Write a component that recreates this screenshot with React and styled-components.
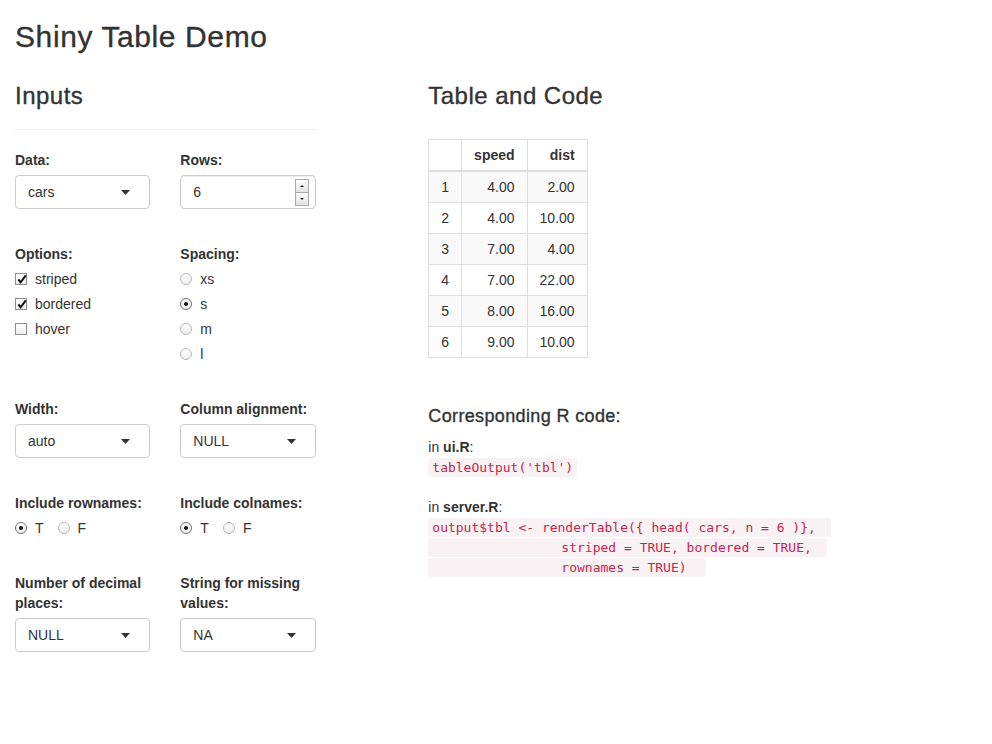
import React from 'react';
import styled, { createGlobalStyle, css } from 'styled-components';

const GlobalStyle = createGlobalStyle`
  html, body { margin: 0; padding: 0; background: #fff; }
  body {
    font-family: "Liberation Sans", Arial, sans-serif;
    font-size: 14px;
    line-height: 20px;
    color: #333;
  }
  *, *::before, *::after { box-sizing: border-box; }
`;

const headingFace = css`
  font-weight: 500;
  letter-spacing: 0.02em;
  -webkit-text-stroke: 0.35px currentColor;
`;

const Page = styled.div`
  padding: 0 15px;
`;

const Title = styled.h2`
  ${headingFace}
  font-size: 30px;
  line-height: 33px;
  margin: 20px 0 10px;
`;

const Row = styled.div`
  display: flex;
  align-items: flex-start;
  margin: 0 -15px;
`;

const Sidebar = styled.div`
  width: 33.3333%;
  padding: 0 15px;
`;

const Main = styled.div`
  width: 58.3333%;
  margin-left: 8.3333%;
  padding: 0 15px;
`;

const SectionTitle = styled.h3`
  ${headingFace}
  font-size: 24px;
  line-height: 26.4px;
  margin: 20px 0 10px;
`;

const Rule = styled.hr`
  box-sizing: content-box;
  height: 0;
  margin: 20px 0;
  border: 0;
  border-top: 1px solid #eee;
`;

const Inputs = styled.div`
  display: flex;
  flex-direction: column;
  gap: 35px;
`;

const InputRow = styled.div`
  display: grid;
  grid-template-columns: 1fr 1fr;
  column-gap: 30px;
  align-items: start;
`;

const Field = styled.div``;

const Label = styled.div`
  font-weight: bold;
  line-height: 20px;
  margin-bottom: 5px;
`;

const SelectBox = styled.div`
  height: 34px;
  border: 1px solid #ccc;
  border-radius: 4px;
  background: #fff;
  display: flex;
  align-items: center;
  justify-content: space-between;
  padding: 0 19px 0 12px;
`;

const NumberBox = styled(SelectBox)`
  padding: 0 6px 0 12px;
  box-shadow: inset 0 1px 1px rgba(0, 0, 0, 0.075);
`;

const Caret = styled.svg`
  width: 9px;
  height: 5px;
  display: block;
`;

const Spinner = styled.div`
  display: flex;
  flex-direction: column;
`;

const SpinButton = styled.span`
  width: 14px;
  height: 14px;
  border: 1px solid #a9a9a9;
  background: linear-gradient(#fdfdfd, #e2e2e2);
  display: flex;
  align-items: center;
  justify-content: center;
  & + & {
    height: 13px;
    border-top: 0;
  }
  &::after {
    content: "";
    width: 0;
    height: 0;
    border-left: 2px solid transparent;
    border-right: 2px solid transparent;
    ${(p) => (p.$up ? 'border-bottom: 2px solid #222;' : 'border-top: 2px solid #222;')}
  }
`;

const OptionList = styled.div`
  display: flex;
  flex-direction: column;
  gap: 5px;
`;

const InlineOptions = styled.div`
  display: flex;
  gap: 14px;
`;

const Option = styled.label`
  display: flex;
  align-items: flex-start;
  gap: 8px;
  line-height: 20px;
`;

const CheckBox = styled.span`
  flex: none;
  width: 12px;
  height: 12px;
  margin-top: 4px;
  border: 1px solid #8c8c8c;
  background: linear-gradient(#ffffff, #ececec);
  position: relative;
  svg {
    position: absolute;
    left: 0;
    top: -1px;
  }
`;

const RadioDot = styled.span`
  flex: none;
  width: 12px;
  height: 12px;
  margin-top: 4px;
  border-radius: 50%;
  border: 1px solid ${(p) => (p.$checked ? '#6f6f6f' : '#b8b8b8')};
  background: linear-gradient(#ffffff, #ededed);
  display: flex;
  align-items: center;
  justify-content: center;
  &::after {
    content: "";
    width: 4px;
    height: 4px;
    border-radius: 50%;
    background: ${(p) => (p.$checked ? '#111' : 'transparent')};
  }
`;

const Table = styled.table`
  border-collapse: collapse;
  border: 1px solid #ddd;
  margin: 30px 0 0;
  font-size: 14px;
`;

const Th = styled.th`
  padding: 5px 12px;
  line-height: 20px;
  border: 1px solid #ddd;
  border-bottom-width: 2px;
  font-weight: bold;
  text-align: right;
`;

const Td = styled.td`
  padding: 5px 12px;
  line-height: 20px;
  border: 1px solid #ddd;
  text-align: ${(p) => (p.$left ? 'left' : 'right')};
`;

const BodyRow = styled.tr`
  background: ${(p) => (p.$striped ? '#f9f9f9' : '#fff')};
`;

const CodeTitle = styled.h4`
  ${headingFace}
  font-size: 18px;
  line-height: 19.8px;
  margin: 49px 0 10px;
`;

const CodeText = styled.div`
  line-height: 20px;
`;

const Code = styled.code`
  font-family: "DejaVu Sans Mono", Menlo, monospace;
  font-size: 13px;
  line-height: 1;
  color: #c7254e;
  background: #f9f2f4;
  padding: 2px 4px;
  border-radius: 4px;
  white-space: pre;
`;

function Select({ value }) {
  return (
    <SelectBox>
      <span>{value}</span>
      <Caret viewBox="0 0 9 5">
        <path d="M0 0H9L4.5 5Z" fill="#333" />
      </Caret>
    </SelectBox>
  );
}

function NumberInput({ value }) {
  return (
    <NumberBox>
      <span>{value}</span>
      <Spinner>
        <SpinButton $up />
        <SpinButton />
      </Spinner>
    </NumberBox>
  );
}

function Check({ label, checked }) {
  return (
    <Option>
      <CheckBox>
        {checked && (
          <svg width="12" height="12" viewBox="0 0 12 12">
            <path d="M2.4 6.4L4.6 9.4L9.8 2.4" fill="none" stroke="#111" strokeWidth="2" strokeLinejoin="miter" />
          </svg>
        )}
      </CheckBox>
      <span>{label}</span>
    </Option>
  );
}

function Radio({ label, checked }) {
  return (
    <Option>
      <RadioDot $checked={checked} />
      <span>{label}</span>
    </Option>
  );
}

const rows = [
  ['1', '4.00', '2.00'],
  ['2', '4.00', '10.00'],
  ['3', '7.00', '4.00'],
  ['4', '7.00', '22.00'],
  ['5', '8.00', '16.00'],
  ['6', '9.00', '10.00'],
];

const serverCode =
  "output$tbl <- renderTable({ head( cars, n = 6 )},  \n" +
  "                 striped = TRUE, bordered = TRUE,  \n" +
  "                 rownames = TRUE)  ";

export default function App() {
  return (
    <>
      <GlobalStyle />
      <Page>
        <Title>Shiny Table Demo</Title>
        <Row>
          <Sidebar>
            <SectionTitle>Inputs</SectionTitle>
            <Rule />
            <Inputs>
              <InputRow>
                <Field>
                  <Label>Data:</Label>
                  <Select value="cars" />
                </Field>
                <Field>
                  <Label>Rows:</Label>
                  <NumberInput value="6" />
                </Field>
              </InputRow>
              <InputRow>
                <Field>
                  <Label>Options:</Label>
                  <OptionList>
                    <Check label="striped" checked />
                    <Check label="bordered" checked />
                    <Check label="hover" />
                  </OptionList>
                </Field>
                <Field>
                  <Label>Spacing:</Label>
                  <OptionList>
                    <Radio label="xs" />
                    <Radio label="s" checked />
                    <Radio label="m" />
                    <Radio label="l" />
                  </OptionList>
                </Field>
              </InputRow>
              <InputRow>
                <Field>
                  <Label>Width:</Label>
                  <Select value="auto" />
                </Field>
                <Field>
                  <Label>Column alignment:</Label>
                  <Select value="NULL" />
                </Field>
              </InputRow>
              <InputRow>
                <Field>
                  <Label>Include rownames:</Label>
                  <InlineOptions>
                    <Radio label="T" checked />
                    <Radio label="F" />
                  </InlineOptions>
                </Field>
                <Field>
                  <Label>Include colnames:</Label>
                  <InlineOptions>
                    <Radio label="T" checked />
                    <Radio label="F" />
                  </InlineOptions>
                </Field>
              </InputRow>
              <InputRow>
                <Field>
                  <Label>Number of decimal places:</Label>
                  <Select value="NULL" />
                </Field>
                <Field>
                  <Label>String for missing values:</Label>
                  <Select value="NA" />
                </Field>
              </InputRow>
            </Inputs>
          </Sidebar>
          <Main>
            <SectionTitle>Table and Code</SectionTitle>
            <Table>
              <thead>
                <tr>
                  <Th />
                  <Th>speed</Th>
                  <Th>dist</Th>
                </tr>
              </thead>
              <tbody>
                {rows.map((r, i) => (
                  <BodyRow key={r[0]} $striped={i % 2 === 0}>
                    <Td $left>{r[0]}</Td>
                    <Td>{r[1]}</Td>
                    <Td>{r[2]}</Td>
                  </BodyRow>
                ))}
              </tbody>
            </Table>
            <CodeTitle>Corresponding R code:</CodeTitle>
            <CodeText>
              in <b>ui.R</b>:
              <br />
              <Code>tableOutput('tbl')</Code>
              <br />
              <br />
              in <b>server.R</b>:
              <br />
              <Code>{serverCode}</Code>
            </CodeText>
          </Main>
        </Row>
      </Page>
    </>
  );
}
